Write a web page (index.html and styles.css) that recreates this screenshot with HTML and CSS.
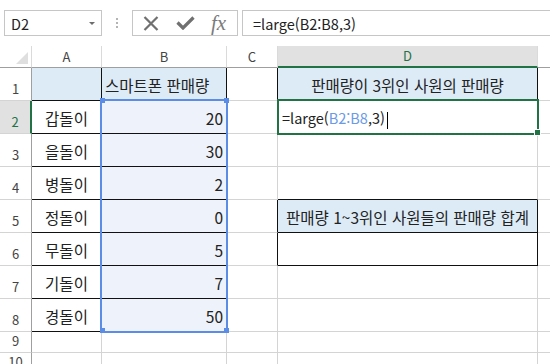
FILE: index.html
```html
<!DOCTYPE html>
<html lang="ko">
<head>
    <meta charset="UTF-8">
    <title>판매량</title>
    <link rel="stylesheet" href="styles.css">
</head>
<body>
    <div class="formula-bar">
        <div class="name-box"><span>D2</span><span class="drop"></span></div>
        <div class="grip"><i></i><i></i><i></i></div>
        <div class="fx-buttons">
            <svg class="icon-cancel" width="16" height="15" viewBox="0 0 16 15">
                <path d="M1.5 1 L14.5 14 M14.5 1 L1.5 14" stroke="#707070" stroke-width="2.2" fill="none"/>
            </svg>
            <svg class="icon-enter" width="19" height="14" viewBox="0 0 19 14">
                <path d="M1.5 6.5 L7 12 L17.5 1.5" stroke="#707070" stroke-width="3.2" fill="none"/>
            </svg>
            <span class="fx">fx</span>
        </div>
        <div class="formula-input">=large(B2:B8,3)</div>
    </div>

    <div class="sheet">
        <!-- column headers -->
        <div class="cell corner"><span class="tri"></span></div>
        <div class="cell col-head">A</div>
        <div class="cell col-head">B</div>
        <div class="cell col-head">C</div>
        <div class="cell col-head active">D</div>
        <div class="cell col-head last"></div>

        <!-- row 1 -->
        <div class="cell row-head">1</div>
        <div class="cell fill-blue bd-r bd-b"></div>
        <div class="cell fill-blue bd-r bd-b left">스마트폰 판매량</div>
        <div class="cell bd-r"></div>
        <div class="cell fill-blue bd-r bd-b center">판매량이 3위인 사원의 판매량</div>
        <div class="cell last"></div>

        <!-- row 2 -->
        <div class="cell row-head active">2</div>
        <div class="cell bd-r bd-b center">갑돌이</div>
        <div class="cell fill-sel bd-r bd-b right">20</div>
        <div class="cell"></div>
        <div class="cell edit">=large(<span class="ref">B2:B8</span>,3)<span class="cursor"></span></div>
        <div class="cell last"></div>

        <!-- row 3 -->
        <div class="cell row-head">3</div>
        <div class="cell bd-r bd-b center">을돌이</div>
        <div class="cell fill-sel bd-r bd-b right">30</div>
        <div class="cell"></div>
        <div class="cell"></div>
        <div class="cell last"></div>

        <!-- row 4 -->
        <div class="cell row-head">4</div>
        <div class="cell bd-r bd-b center">병돌이</div>
        <div class="cell fill-sel bd-r bd-b right">2</div>
        <div class="cell"></div>
        <div class="cell bd-b"></div>
        <div class="cell last"></div>

        <!-- row 5 -->
        <div class="cell row-head">5</div>
        <div class="cell bd-r bd-b center">정돌이</div>
        <div class="cell fill-sel bd-r bd-b right">0</div>
        <div class="cell bd-r"></div>
        <div class="cell fill-blue bd-r bd-b center">판매량 1~3위인 사원들의 판매량 합계</div>
        <div class="cell last"></div>

        <!-- row 6 -->
        <div class="cell row-head">6</div>
        <div class="cell bd-r bd-b center">무돌이</div>
        <div class="cell fill-sel bd-r bd-b right">5</div>
        <div class="cell bd-r"></div>
        <div class="cell bd-r bd-b"></div>
        <div class="cell last"></div>

        <!-- row 7 -->
        <div class="cell row-head">7</div>
        <div class="cell bd-r bd-b center">기돌이</div>
        <div class="cell fill-sel bd-r bd-b right">7</div>
        <div class="cell"></div>
        <div class="cell"></div>
        <div class="cell last"></div>

        <!-- row 8 -->
        <div class="cell row-head">8</div>
        <div class="cell bd-r bd-b center">경돌이</div>
        <div class="cell fill-sel bd-r bd-b right">50</div>
        <div class="cell"></div>
        <div class="cell"></div>
        <div class="cell last"></div>

        <!-- row 9 -->
        <div class="cell row-head">9</div>
        <div class="cell"></div>
        <div class="cell"></div>
        <div class="cell"></div>
        <div class="cell"></div>
        <div class="cell last"></div>

        <!-- row 10 -->
        <div class="cell row-head">10</div>
        <div class="cell"></div>
        <div class="cell"></div>
        <div class="cell"></div>
        <div class="cell"></div>
        <div class="cell last"></div>

        <!-- selection overlays -->
        <div class="range"></div>
        <div class="handle h-tl"></div>
        <div class="handle h-tr"></div>
        <div class="handle h-bl"></div>
        <div class="handle h-br"></div>
        <div class="active-cell"></div>
        <div class="fill-handle"></div>
    </div>
</body>
</html>
```

FILE: styles.css
```css
body {
    margin: 0;
    width: 550px;
    height: 364px;
    overflow: hidden;
    background: #fff;
    color: #222;
    font-family: "Noto Sans CJK KR", "Noto Sans", sans-serif;
}

/* formula bar */

.formula-bar {
    display: flex;
    height: 26px;
    margin-top: 10px;
}

.name-box {
    margin-left: 4px;
    width: 98px;
    box-sizing: border-box;
    border: 1px solid #c6c6c6;
    display: flex;
    align-items: center;
    justify-content: space-between;
    padding: 0 6px;
    font-size: 14.5px;
}

.drop {
    width: 0;
    height: 0;
    border-left: 3px solid transparent;
    border-right: 3px solid transparent;
    border-top: 3px solid #6d6d6d;
}

.grip {
    width: 30px;
    display: flex;
    flex-direction: column;
    align-items: center;
    justify-content: center;
    gap: 2px;
}

.grip i {
    width: 2px;
    height: 2px;
    background: #b4b4b4;
}

.fx-buttons {
    width: 106px;
    box-sizing: border-box;
    border: 1px solid #c6c6c6;
    display: flex;
    align-items: center;
    padding-left: 10px;
}

.icon-cancel {
    margin-right: 17px;
}

.icon-enter {
    margin-right: 16px;
}

.fx {
    font-family: "Liberation Serif", serif;
    font-style: italic;
    font-size: 21px;
    color: #7b7b7b;
    line-height: 1;
}

.formula-input {
    flex: 1;
    margin-left: 4px;
    border: 1px solid #c6c6c6;
    border-right: none;
    padding-left: 10px;
    display: flex;
    align-items: center;
    font-size: 14.5px;
}

/* sheet grid */

.sheet {
    position: relative;
    margin-top: 10px;
    display: grid;
    grid-template-columns: 32px 70px 125px 51px 260px 1fr;
    grid-template-rows: 22px repeat(8, 33px) 21px 21px;
}

.cell {
    box-sizing: border-box;
    border-right: 1px solid #d4d4d4;
    border-bottom: 1px solid #d4d4d4;
    display: flex;
    align-items: flex-end;
    padding: 0 3px 6px;
    font-size: 15.5px;
    line-height: 18px;
    white-space: nowrap;
}

.cell.last {
    border-right: none;
}

.corner {
    border-bottom-color: #9f9f9f;
    border-right-color: #dadada;
    justify-content: flex-end;
    padding: 0 3px 3px 0;
}

.tri {
    width: 12px;
    height: 12px;
    background: #dfdfdf;
    clip-path: polygon(100% 0, 100% 100%, 0 100%);
}

.col-head {
    justify-content: center;
    align-items: center;
    padding: 0;
    font-size: 13px;
    color: #444;
    border-right-color: #dadada;
    border-bottom-color: #9f9f9f;
}

.col-head.active {
    background: #e1e1e1;
    color: #217346;
    border-bottom: 2px solid #217346;
}

.row-head {
    justify-content: center;
    padding: 0 0 3px;
    font-size: 13px;
    line-height: 16px;
    color: #444;
    border-right-color: #9f9f9f;
}

.row-head.active {
    background: #e1e1e1;
    color: #217346;
    border-right: 2px solid #217346;
}

.left { justify-content: flex-start; }
.center { justify-content: center; }
.right { justify-content: flex-end; }

.fill-blue { background: #ddebf7; }
.fill-sel { background: #edf2fb; }

.bd-r { border-right-color: #111; }
.bd-b { border-bottom-color: #111; }

.edit {
    padding-left: 4px;
    font-size: 14.5px;
    color: #222;
}

.ref {
    color: #6a9ae8;
}

.cursor {
    display: inline-block;
    width: 1px;
    height: 17px;
    margin-left: 2px;
    margin-bottom: -2px;
    background: #000;
}

/* overlays */

.range {
    position: absolute;
    left: 100px;
    top: 53px;
    width: 128px;
    height: 234px;
    box-sizing: border-box;
    border: 2px solid #5b8de6;
}

.handle {
    position: absolute;
    width: 5px;
    height: 5px;
    background: #5b8de6;
}

.h-tl { left: 100px; top: 52px; }
.h-tr { left: 224px; top: 52px; }
.h-bl { left: 100px; top: 282px; }
.h-br { left: 224px; top: 282px; }

.active-cell {
    position: absolute;
    left: 277px;
    top: 53px;
    width: 262px;
    height: 36px;
    box-sizing: border-box;
    border: 2px solid #217346;
}

.fill-handle {
    position: absolute;
    left: 535px;
    top: 84px;
    width: 5px;
    height: 5px;
    background: #217346;
    box-shadow: 0 0 0 1px #fff;
}
```
